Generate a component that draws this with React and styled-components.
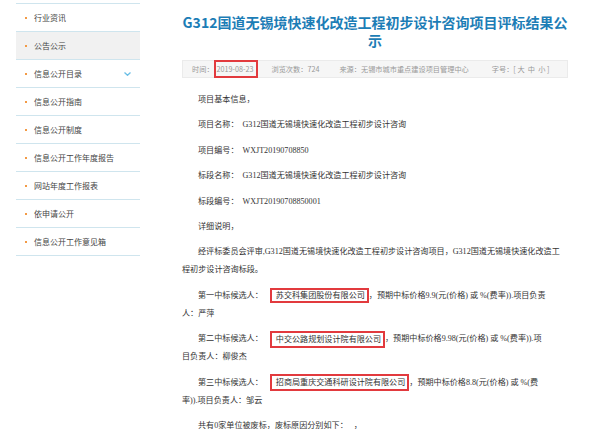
import React from 'react'
import styled, { createGlobalStyle } from 'styled-components'

const GlobalStyle = createGlobalStyle`
  body {
    margin: 0;
    background: #fff;
    font-family: "Noto Sans CJK SC", "Liberation Sans", sans-serif;
  }
`

const Page = styled.div`
  display: flex;
  align-items: flex-start;
  width: 600px;
  height: 429px;
  overflow: hidden;
`

const SideNav = styled.ul`
  list-style: none;
  margin: 3px 0 0 16px;
  padding: 0;
  width: 124px;
  border-top: 1px solid #cfe5ee;
`

const NavItem = styled.li`
  display: flex;
  align-items: center;
  height: 27px;
  padding-left: 9px;
  border-bottom: 1px solid #cfe5ee;
  background: ${({ active }) => (active ? '#f1f1f1' : '#fff')};
  color: #444;
  font-size: 8px;
`

const Dot = styled.span`
  width: 2px;
  height: 2px;
  background: #f39a45;
  margin-right: 7px;
`

const NavLabel = styled.span`
  flex: 1;
`

const Chevron = styled.svg`
  width: 7px;
  height: 4px;
  margin-right: 9px;
`

const Article = styled.div`
  width: 386px;
  margin-left: 42px;
`

const Title = styled.h1`
  margin: 13px 0 0;
  text-align: center;
  font-size: 14px;
  line-height: 18px;
  font-weight: 700;
  color: #1c7db6;
`

const MetaBar = styled.div`
  display: flex;
  align-items: center;
  height: 18px;
  margin-top: 11px;
  padding-left: 9px;
  background: #f6f6f6;
  border: 1px solid #ebebeb;
  box-sizing: border-box;
  font-size: 7.2px;
  color: #999;
`

const MetaItem = styled.span`
  display: flex;
  align-items: center;
  margin-left: ${({ gap }) => gap || 0}px;
  white-space: nowrap;
`

const DateMark = styled.span`
  display: inline-flex;
  align-items: center;
  height: 18px;
  padding: 0 3px 0 1px;
  border: 2px solid #e23a3e;
  box-sizing: border-box;
`

const Body = styled.div`
  margin-top: 13px;
  font-family: "Liberation Serif", "Noto Sans CJK SC", serif;
  font-size: 8.1px;
  line-height: 18px;
  color: #333;
`

const Para = styled.p`
  margin: 0 0 7.4px;
  text-indent: 16px;
  white-space: nowrap;
`

const Mark = styled.span`
  display: inline-block;
  vertical-align: middle;
  margin-left: 5px;
  padding: ${({ tall }) => (tall ? '1px' : '0')} 2px ${({ tall }) => (tall ? '1px' : '0')} 4px;
  line-height: 11px;
  border: 2px solid #e23a3e;
  text-indent: 0;
`

const navItems = [
  '行业资讯',
  '公告公示',
  '信息公开目录',
  '信息公开指南',
  '信息公开制度',
  '信息公开工作年度报告',
  '网站年度工作报表',
  '依申请公开',
  '信息公开工作意见箱',
]

export default function App() {
  return (
    <>
      <GlobalStyle />
      <Page>
        <SideNav>
          {navItems.map((label, i) => (
            <NavItem key={label} active={i === 1}>
              <Dot />
              <NavLabel>{label}</NavLabel>
              {i === 2 && (
                <Chevron viewBox="0 0 7 4">
                  <path d="M0.5 0.5 L3.5 3.3 L6.5 0.5" fill="none" stroke="#6cbfe6" strokeWidth="1.3" />
                </Chevron>
              )}
            </NavItem>
          ))}
        </SideNav>

        <Article>
          <Title>G312国道无锡境快速化改造工程初步设计咨询项目评标结果公示</Title>

          <MetaBar>
            <MetaItem>
              时间：<DateMark>2019-08-23</DateMark>
            </MetaItem>
            <MetaItem gap={13}>浏览次数：724</MetaItem>
            <MetaItem gap={20}>来源：无锡市城市重点建设项目管理中心</MetaItem>
            <MetaItem gap={23}>字号：[ 大&nbsp; 中&nbsp; 小 ]</MetaItem>
          </MetaBar>

          <Body>
            <Para>项目基本信息，</Para>
            <Para>项目名称：&nbsp; G312国道无锡境快速化改造工程初步设计咨询</Para>
            <Para>项目编号：&nbsp; WXJT20190708850</Para>
            <Para>标段名称：&nbsp; G312国道无锡境快速化改造工程初步设计咨询</Para>
            <Para>标段编号：&nbsp; WXJT20190708850001</Para>
            <Para>详细说明，</Para>
            <Para>
              经评标委员会评审,G312国道无锡境快速化改造工程初步设计咨询项目，G312国道无锡境快速化改造工
              <br />
              程初步设计咨询标段。
            </Para>
            <Para>
              第一中标候选人：&nbsp;<Mark>苏交科集团股份有限公司</Mark>，预期中标价格9.9(元(价格) 或 %(费率)).项目负责
              <br />
              人：严萍
            </Para>
            <Para>
              第二中标候选人：&nbsp;<Mark tall>中交公路规划设计院有限公司</Mark>，预期中标价格9.98(元(价格) 或 %(费率)).项
              <br />
              目负责人：柳俊杰
            </Para>
            <Para>
              第三中标候选人：&nbsp;<Mark tall>招商局重庆交通科研设计院有限公司</Mark>，预期中标价格8.8(元(价格) 或 %(费
              <br />
              率)).项目负责人：邹云
            </Para>
            <Para>共有0家单位被废标，废标原因分别如下：&nbsp;&nbsp; ，</Para>
          </Body>
        </Article>
      </Page>
    </>
  )
}
